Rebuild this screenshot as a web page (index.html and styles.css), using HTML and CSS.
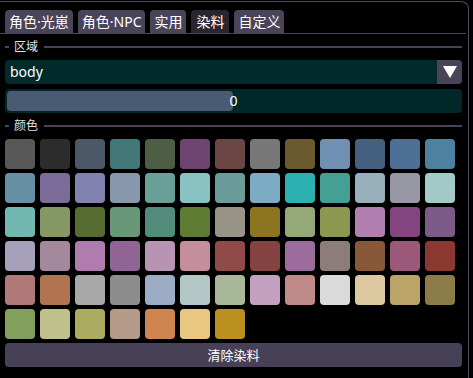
FILE: index.html
```html
<!DOCTYPE html>
<html lang="zh">
	<head>
		<title>染料</title>
		<link rel="stylesheet" href="styles.css">
	</head>
	<body>
		<div class="window">
			<div class="tabs">
				<span class="tab">角色·光崽</span>
				<span class="tab">角色·NPC</span>
				<span class="tab">实用</span>
				<span class="tab active">染料</span>
				<span class="tab">自定义</span>
			</div>

			<div class="sep"><span class="dash"></span><span class="label">区域</span><span class="line"></span></div>

			<div class="combo">
				<span class="combo-text">body</span>
				<span class="combo-btn"><svg width="14" height="12" viewBox="0 0 14 12"><polygon points="0,0 14,0 7,12" fill="#fff"/></svg></span>
			</div>

			<div class="slider">
				<div class="grab"></div>
				<span class="slider-val">0</span>
			</div>

			<div class="sep"><span class="dash"></span><span class="label">颜色</span><span class="line"></span></div>

			<div class="swatches" id="swatches"></div>

			<div class="btn">清除染料</div>
		</div>
		<script type="text/javascript">
		var colors = [
			"#585858","#2c2c2c","#4a5868","#427878","#4e5e44","#6e4470","#6c4644","#787878","#6a5a2e","#7090b4","#44607e","#4c7096","#4e80a0",
			"#6890a4","#7c6c9a","#8282ae","#8898ac","#68a098","#88c2c2","#6c9c9a","#7cacc4","#2cb0b0","#44a094","#98b0bc","#9898a4","#a4cac8",
			"#72b8b0","#869866","#566c30","#689878","#548c7c","#5e7c34","#989488","#8c7420","#94a878","#8c9850","#b080b0","#844480","#7e5a88",
			"#a6a0ba","#a4889c","#b07cb0","#906494","#b894b4","#c48e9c","#904a48","#844240","#9c6c9c","#8c7c7a","#885838","#9c5878","#8c3830",
			"#b07878","#b07450","#a8a8a8","#8c8c8c","#9cacc4","#b4c6c6","#a8b898","#c4a0c0","#c08a88","#dadada","#dec8a0","#bca468","#8c7c48",
			"#80a05c","#c0c08c","#acac60","#b49a88","#d08450","#e8c880","#ba9020"
		];
		var box = document.getElementById("swatches");
		for (var i = 0; i < colors.length; i++) {
			var s = document.createElement("span");
			s.className = "swatch";
			s.style.background = colors[i];
			box.appendChild(s);
		}
		</script>
	</body>
</html>
```

FILE: styles.css
```css
body, html {
	margin:0;
	padding:0;
	background:#000;
	color:#fff;
	font-family:"Noto Sans","Noto Sans CJK SC",sans-serif;
	overflow:hidden;
}
.window {
	box-sizing:border-box;
	width:471px;
	height:377px;
	margin:1px 0 0 -2px;
	padding:8px 6px 0 6px;
	border:1px solid #4f4a5e;
	border-bottom:0;
	border-top-right-radius:8px;
}
.tabs {
	display:flex;
	gap:5px;
	height:23px;
	margin:0 -4px 0 -7px;
	padding-left:7px;
	border-bottom:1px solid #4a4458;
}
.tab {
	display:flex;
	align-items:center;
	padding:0 4px;
	height:23px;
	font-size:14px;
	line-height:1;
	background:#4a4458;
	border-radius:4px 4px 0 0;
}
.tab.active {
	background:#2a2631;
	padding:0 5px;
}
.sep {
	display:flex;
	align-items:center;
	height:16px;
	margin-top:5px;
}
.dash {
	width:4px;
	height:2px;
	background:#4a4458;
}
.label {
	margin:0 6px 0 5px;
	font-size:12px;
	color:#e4e4e4;
	line-height:16px;
}
.line {
	flex:1;
	height:2px;
	background:#4a4458;
}
.combo {
	display:flex;
	height:24px;
	margin-top:5px;
	background:#012a2a;
	border-radius:4px;
	overflow:hidden;
}
.combo-text {
	flex:1;
	padding-left:5px;
	font-size:14px;
	line-height:24px;
}
.combo-btn {
	display:flex;
	align-items:center;
	justify-content:center;
	width:25px;
	background:#4a4458;
}
.slider {
	position:relative;
	height:24px;
	margin-top:5px;
	background:#012828;
	border-radius:4px;
}
.grab {
	position:absolute;
	left:2px;
	top:2px;
	width:226px;
	height:20px;
	background:#4a5a72;
	border-radius:4px;
}
.slider-val {
	position:relative;
	display:block;
	text-align:center;
	font-size:14px;
	line-height:24px;
}
.sep + .swatches {
	margin-top:5px;
}
.swatches {
	display:grid;
	grid-template-columns:repeat(13, 30px);
	grid-auto-rows:30px;
	column-gap:5px;
	row-gap:4px;
}
.swatch {
	border-radius:4px;
}
.btn {
	height:24px;
	margin-top:4px;
	background:#474157;
	border-radius:4px;
	text-align:center;
	font-size:13px;
	line-height:24px;
}
```
